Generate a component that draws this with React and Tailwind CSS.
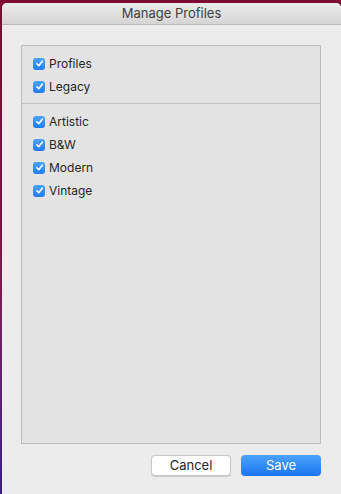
const font = { fontFamily: '"Inter", "Liberation Sans", sans-serif' }

function Check({ label }) {
    return (
        <div className="flex items-center h-[23px]">
            <span className="w-[12px] h-[12px] rounded-[3px] bg-gradient-to-b from-[#4ea3fb] to-[#1e7cf4] flex items-center justify-center">
                <svg width="9" height="9" viewBox="0 0 9 9">
                    <path d="M1.8 4.8 L3.7 6.7 L7.3 2.2" fill="none" stroke="white" strokeWidth="1.6" strokeLinecap="round" strokeLinejoin="round" />
                </svg>
            </span>
            <span className="ml-[4px] text-[12px] text-[#262626]">{label}</span>
        </div>
    )
}

export default function App() {
    return (
        <div className="w-[341px] h-[494px] bg-gradient-to-b from-[#7d0b33] via-[#8a0d45] to-[#3a1a8a] pt-[3px] pl-[2px] overflow-hidden" style={font}>
            <div className="w-[339px] h-[491px] bg-[#ececec] rounded-tl-[5px] rounded-tr-[5px] flex flex-col">
                {/* Title bar */}
                <div className="h-[22px] rounded-t-[5px] bg-gradient-to-b from-[#ebebeb] to-[#d5d5d5] border-b border-[#b8b8b8] flex items-center justify-center">
                    <span className="text-[13px] text-[#404040]">Manage Profiles</span>
                </div>

                {/* List */}
                <div className="mt-[20px] ml-[19px] w-[300px] h-[399px] bg-[#e3e3e3] border border-[#bcbcbc] flex flex-col">
                    <div className="pl-[11px] pt-[6px] pb-[5px]">
                        <Check label="Profiles" />
                        <Check label="Legacy" />
                    </div>
                    <div className="h-px bg-[#c4c4c4]" />
                    <div className="pl-[11px] pt-[6px]">
                        <Check label="Artistic" />
                        <Check label="B&W" />
                        <Check label="Modern" />
                        <Check label="Vintage" />
                    </div>
                </div>

                {/* Buttons */}
                <div className="mt-[11px] flex justify-end gap-[10px] pr-[20px]">
                    <button className="w-[80px] h-[21px] rounded-[4px] bg-white border border-[#c8c8c8] text-[13px] text-[#262626] leading-none shadow-[0_0.5px_1px_rgba(0,0,0,0.15)]">
                        Cancel
                    </button>
                    <button className="w-[80px] h-[21px] rounded-[4px] bg-gradient-to-b from-[#4ba2fc] to-[#1a76f0] text-[13px] text-white leading-none">
                        Save
                    </button>
                </div>
            </div>
        </div>
    )
}
